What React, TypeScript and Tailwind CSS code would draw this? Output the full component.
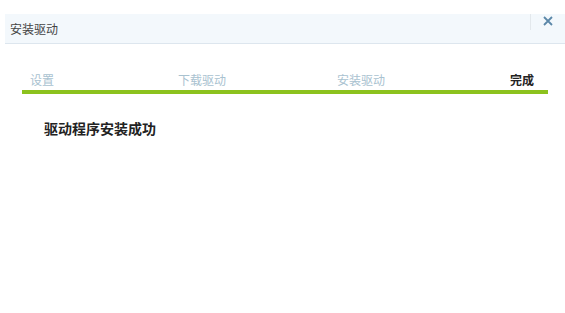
import React from 'react';

const steps = [
  { label: '设置', ml: 'ml-[8px]', done: false },
  { label: '下载驱动', ml: 'ml-[124px]', done: false },
  { label: '安装驱动', ml: 'ml-[111px]', done: false },
  { label: '完成', ml: 'ml-[125px]', done: true },
];

export default function App() {
  return (
    <div
      className="w-[565px] h-[313px] bg-white overflow-hidden"
      style={{ fontFamily: '"Noto Sans CJK SC", "Liberation Sans", sans-serif' }}
    >
      <div className="pt-[14px] pl-[5px]">
        {/* header */}
        <div className="h-[30px] bg-[#f3f8fc] border-b border-[#dde6ee] flex items-center">
          <span className="ml-[5px] text-[12px] leading-none text-[#444]">安装驱动</span>
          <div className="ml-auto self-start h-[16px] w-px bg-[#e3e8ec]" />
          <div className="w-[34px] self-start flex justify-center pt-[2px]">
            <svg width="10" height="10" viewBox="0 0 10 10">
              <path d="M1 1 L9 9 M9 1 L1 9" stroke="#5b87a8" strokeWidth="1.8" fill="none" />
            </svg>
          </div>
        </div>

        {/* steps */}
        <div className="mt-[28px] ml-[17px] w-[526px]">
          <div className="flex items-end h-[14px]">
            {steps.map((s) => (
              <span
                key={s.label}
                className={`${s.ml} text-[12px] leading-none ${
                  s.done ? 'font-bold text-[#222]' : 'text-[#a9c2d0]'
                }`}
              >
                {s.label}
              </span>
            ))}
          </div>
          <div className="mt-[4px] h-[4px] bg-[#8cc21e]" />
        </div>

        <div className="mt-[27px] ml-[39px] text-[14px] leading-none font-bold text-[#222]">
          驱动程序安装成功
        </div>
      </div>
    </div>
  );
}
